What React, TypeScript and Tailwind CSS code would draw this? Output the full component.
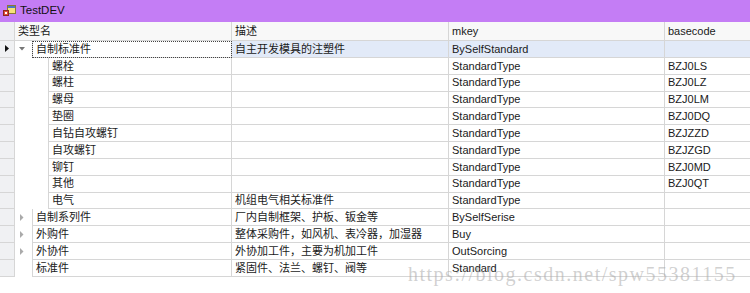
import React from "react";

type Row = {
  name: string;
  desc?: string;
  mkey: string;
  code?: string;
  level: 0 | 1;
  arrow?: "open" | "closed";
};

const rows: Row[] = [
  { name: "自制标准件", desc: "自主开发模具的注塑件", mkey: "BySelfStandard", level: 0, arrow: "open" },
  { name: "螺栓", mkey: "StandardType", code: "BZJ0LS", level: 1 },
  { name: "螺柱", mkey: "StandardType", code: "BZJ0LZ", level: 1 },
  { name: "螺母", mkey: "StandardType", code: "BZJ0LM", level: 1 },
  { name: "垫圈", mkey: "StandardType", code: "BZJ0DQ", level: 1 },
  { name: "自钻自攻螺钉", mkey: "StandardType", code: "BZJZZD", level: 1 },
  { name: "自攻螺钉", mkey: "StandardType", code: "BZJZGD", level: 1 },
  { name: "铆钉", mkey: "StandardType", code: "BZJ0MD", level: 1 },
  { name: "其他", mkey: "StandardType", code: "BZJ0QT", level: 1 },
  { name: "电气", desc: "机组电气相关标准件", mkey: "StandardType", level: 1 },
  { name: "自制系列件", desc: "厂内自制框架、护板、钣金等", mkey: "BySelfSerise", level: 0, arrow: "closed" },
  { name: "外购件", desc: "整体采购件，如风机、表冷器，加湿器", mkey: "Buy", level: 0, arrow: "closed" },
  { name: "外协件", desc: "外协加工件，主要为机加工件", mkey: "OutSorcing", level: 0, arrow: "closed" },
  { name: "标准件", desc: "紧固件、法兰、螺钉、阀等", mkey: "Standard", level: 0 },
];

const font = { fontFamily: '"Liberation Sans", "Noto Sans CJK SC", sans-serif' };

function AppIcon() {
  return (
    <svg width="13" height="12" viewBox="0 0 13 12">
      <rect x="4.5" y="0.5" width="8" height="8" fill="#f6e27a" stroke="#8a7a30" />
      <rect x="5" y="1" width="7" height="2" fill="#4a78c8" />
      <rect x="0.5" y="5.5" width="5" height="5" fill="#e04a3a" stroke="#8a2a20" />
      <rect x="2" y="7" width="2" height="2" fill="#fff" />
    </svg>
  );
}

function Arrow({ kind }: { kind: "open" | "closed" }) {
  if (kind === "open")
    return (
      <svg width="6" height="4" viewBox="0 0 6 4">
        <path d="M0 0 H6 L3 3.5 Z" fill="#777" />
      </svg>
    );
  return (
    <svg width="4" height="7" viewBox="0 0 4 7">
      <path d="M0 0 V7 L3.5 3.5 Z" fill="#aaa" />
    </svg>
  );
}

export default function App() {
  return (
    <div className="relative w-[750px] h-[293px] overflow-hidden bg-white text-[11px] text-[#1a1a1a]" style={font}>
      {/* title bar */}
      <div className="flex items-center h-[22px] bg-[#c47df5] pl-[3px] gap-[4px]">
        <AppIcon />
        <span className="text-[11.5px] text-[#111]">TestDEV</span>
      </div>

      {/* header */}
      <div className="flex h-[19px] bg-[#f8f8f8] border-b border-[#d6d6d6]">
        <div className="w-[15px] shrink-0 border-r border-[#d6d6d6] bg-[#f0f1f3]" />
        <div className="w-[217px] shrink-0 border-r border-[#d6d6d6] pl-[3px] flex items-center">类型名</div>
        <div className="w-[217px] shrink-0 border-r border-[#d6d6d6] pl-[3px] flex items-center">描述</div>
        <div className="w-[216px] shrink-0 border-r border-[#d6d6d6] pl-[3px] flex items-center">mkey</div>
        <div className="flex-1 pl-[3px] flex items-center">basecode</div>
      </div>

      {/* body */}
      {rows.map((r, i) => {
        const selected = i === 0;
        const cellBg = selected ? "bg-[#e2eaf8]" : "bg-white";
        return (
          <div key={i} className="flex h-[16.85px]">
            <div className="w-[15px] shrink-0 border-r border-b border-[#d6d6d6] bg-[#f0f1f3] flex items-center pl-[5px]">
              {selected && (
                <svg width="4" height="7" viewBox="0 0 4 7">
                  <path d="M0 0 V7 L4 3.5 Z" fill="#111" />
                </svg>
              )}
            </div>
            <div className="w-[217px] shrink-0 flex">
              <div className={`${r.level === 0 ? "w-[17px]" : "w-[33px]"} shrink-0 flex items-center justify-center`}>
                {r.level === 0 && r.arrow && (
                  <span className="flex w-[17px] justify-center pr-[4px]">
                    <Arrow kind={r.arrow} />
                  </span>
                )}
              </div>
              <div
                className={`flex-1 flex items-center pl-[3px] border-l border-r border-[#d6d6d6] ${
                  selected ? "outline outline-1 outline-dotted outline-[#444] -outline-offset-1 border-b" : "border-b"
                }`}
              >
                {r.name}
              </div>
            </div>
            <div className={`w-[217px] shrink-0 border-r border-b border-[#d6d6d6] pl-[3px] flex items-center ${cellBg}`}>{r.desc}</div>
            <div className={`w-[216px] shrink-0 border-r border-b border-[#d6d6d6] pl-[3px] flex items-center ${cellBg}`}>{r.mkey}</div>
            <div className={`flex-1 border-b border-[#d6d6d6] pl-[3px] flex items-center ${cellBg}`}>{r.code}</div>
          </div>
        );
      })}

      {/* watermark */}
      <div
        className="absolute left-[408px] top-[259px] text-[20px] tracking-[1.5px] text-[rgba(170,170,170,0.55)] whitespace-nowrap pointer-events-none"
        style={{ fontFamily: '"Liberation Serif", serif' }}
      >
        https://blog.csdn.net/spw55381155
      </div>
    </div>
  );
}
